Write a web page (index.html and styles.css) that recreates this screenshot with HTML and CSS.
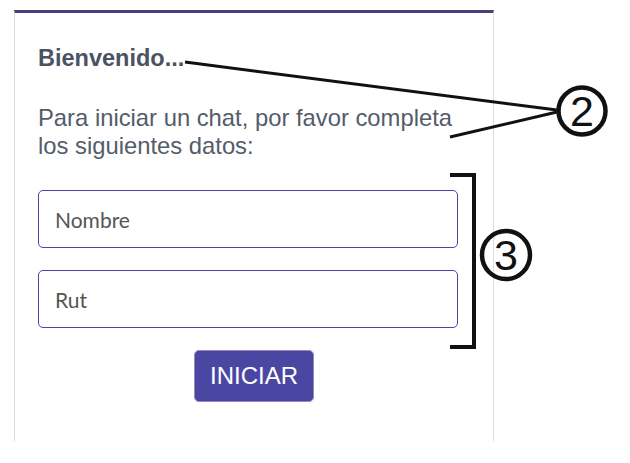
FILE: index.html
```html
<!DOCTYPE html>
<html lang="es">
<head>
    <meta charset="UTF-8">
    <meta name="viewport" content="width=device-width, initial-scale=1.0">
    <title>Chat</title>
    <link rel="stylesheet" href="styles.css">
</head>
<body>
    <div class="chat-card">
        <h2 class="welcome">Bienvenido...</h2>
        <p class="intro">Para iniciar un chat, por favor completa los siguientes datos:</p>
        <form class="chat-form" onsubmit="return false">
            <input type="text" class="field" placeholder="Nombre">
            <input type="text" class="field" placeholder="Rut">
            <div class="actions">
                <button type="submit" class="btn-start">INICIAR</button>
            </div>
        </form>
    </div>

    <svg class="callouts" width="630" height="463" viewBox="0 0 630 463">
        <g fill="none" stroke="#111" stroke-width="3">
            <line x1="185" y1="62" x2="557" y2="110"/>
            <line x1="450" y1="137" x2="557" y2="112"/>
            <circle cx="582" cy="111" r="23.5" stroke-width="4.5"/>
            <polyline points="450,175 474,175 474,347 450,347" stroke-width="4"/>
            <circle cx="506" cy="255" r="24" stroke-width="4.5"/>
        </g>
        <g font-family="Liberation Sans, Arial, sans-serif" font-size="43" fill="#111" text-anchor="middle">
            <text x="582" y="126">2</text>
            <text x="506" y="270">3</text>
        </g>
    </svg>
</body>
</html>
```

FILE: styles.css
```css
body {
    margin: 0;
    padding: 0;
    background: #ffffff;
    font-family: 'Liberation Sans', Arial, sans-serif;
}
.chat-card {
    box-sizing: border-box;
    margin: 10px 0 0 14px;
    width: 480px;
    height: 431px;
    border-top: 3px solid #473f7c;
    border-left: 1px solid #dcdcdc;
    border-right: 1px solid #dcdcdc;
    padding: 32px 23px 0 23px;
}
.welcome {
    margin: 0;
    font-size: 23.5px;
    line-height: 27px;
    font-weight: 700;
    color: #4b5261;
}
.intro {
    margin: 32px 0 0 0;
    font-size: 23.8px;
    line-height: 28px;
    color: #545c6a;
}
.chat-form {
    margin-top: 30px;
    display: flex;
    flex-direction: column;
    gap: 22px;
}
.field {
    box-sizing: border-box;
    width: 420px;
    height: 58px;
    padding: 0 16px;
    border: 1px solid #4a47a3;
    border-radius: 5px;
    font-family: Lato, sans-serif;
    font-size: 21px;
    color: #444;
    outline: none;
}
.field::placeholder {
    color: #555555;
}
.actions {
    display: flex;
    justify-content: center;
}
.btn-start {
    width: 120px;
    height: 52px;
    border: 1px solid #8d8bc4;
    border-radius: 5px;
    background-color: #4a47a3;
    color: #ffffff;
    font-family: 'Liberation Sans', Arial, sans-serif;
    font-size: 24px;
    cursor: pointer;
}
.callouts {
    position: absolute;
    top: 0;
    left: 0;
    pointer-events: none;
}
```
